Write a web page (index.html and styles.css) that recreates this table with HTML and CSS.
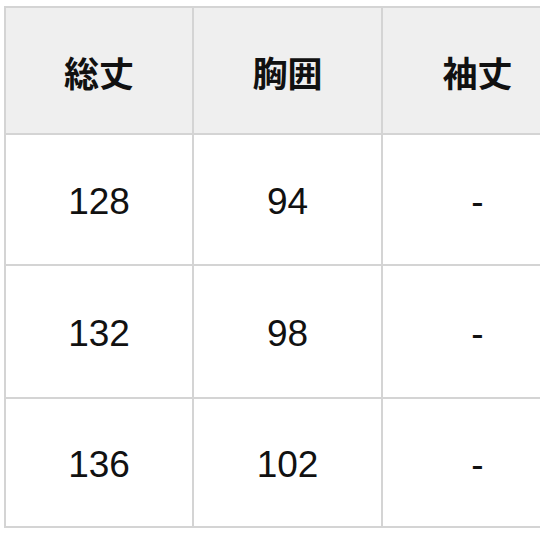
FILE: index.html
```html
<!DOCTYPE html>
<html lang="ja">
<head>
<meta charset="utf-8">
<link rel="stylesheet" href="styles.css">
</head>
<body>
<div class="frame">
  <table class="size-table">
    <thead>
      <tr class="head-row">
        <th class="c1">総丈</th>
        <th class="c2">胸囲</th>
        <th class="c3">袖丈</th>
      </tr>
    </thead>
    <tbody>
      <tr class="r1"><td>128</td><td>94</td><td>-</td></tr>
      <tr class="r2"><td>132</td><td>98</td><td>-</td></tr>
      <tr class="r3"><td>136</td><td>102</td><td>-</td></tr>
    </tbody>
  </table>
</div>
</body>
</html>
```
FILE: styles.css
```css
html, body {
  margin: 0;
  padding: 0;
  background: #ffffff;
}
.frame {
  width: 540px;
  height: 540px;
  overflow: hidden;
  padding: 6px 0 0 4px;
  box-sizing: border-box;
}
.size-table {
  border-collapse: separate;
  border-spacing: 0;
  table-layout: fixed;
  width: 570px;
  border-top: 2px solid #d4d4d4;
  border-left: 2px solid #d4d4d4;
  color: #111111;
}
.size-table th,
.size-table td {
  border-right: 2px solid #d4d4d4;
  border-bottom: 2px solid #d4d4d4;
  text-align: center;
  vertical-align: middle;
  padding: 0;
  box-sizing: border-box;
}
.c1 { width: 188px; }
.c2 { width: 189px; }
.c3 { width: 191px; }
.head-row th {
  background: #efefef;
  height: 127px;
  padding-top: 2px;
  font-family: "Noto Sans CJK JP", "Noto Sans", sans-serif;
  font-weight: 700;
  font-size: 35px;
  line-height: 1;
}
.size-table td {
  font-family: "Liberation Sans", Arial, sans-serif;
  font-size: 37px;
  line-height: 1;
  font-weight: 400;
}
.r1 td { height: 131px; padding-top: 4px; }
.r2 td { height: 133px; padding-top: 4px; }
.r3 td { height: 129px; padding-top: 4px; }
```
